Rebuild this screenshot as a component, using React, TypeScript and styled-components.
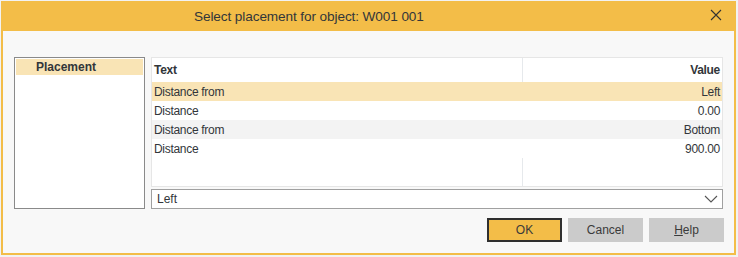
import React, { ReactElement } from 'react'
import styled, { createGlobalStyle } from 'styled-components'

const ORANGE = '#f3bd48'
const HIGHLIGHT = '#f9e4b5'
const TEXT = '#32363a'

const GlobalStyle = createGlobalStyle`
  html, body {
    margin: 0;
    padding: 0;
    background: #f2f2f2;
    font-family: "Liberation Sans", Arial, sans-serif;
  }
`

const Dialog = styled.div`
  box-sizing: border-box;
  margin: 1px 0 0 1px;
  width: 735px;
  height: 254px;
  border: 2px solid ${ORANGE};
  border-top: 0;
  background: #f8f8f8;
  display: flex;
  flex-direction: column;
`

const TitleBar = styled.div`
  height: 30px;
  margin: 0 -2px;
  background: ${ORANGE};
  display: flex;
  align-items: center;
  padding: 0 13px 0 193px;
`

const Title = styled.div`
  font-size: 13.6px;
  letter-spacing: -0.1px;
  color: ${TEXT};
  flex: 1;
`

const CloseButton = styled.button`
  width: 14px;
  height: 14px;
  padding: 0;
  border: 0;
  background: none;
  display: flex;
  align-items: center;
  justify-content: center;
  margin-top: -2px;
`

const Body = styled.div`
  flex: 1;
  display: flex;
  flex-direction: column;
  padding: 26px 10px 0 11px;
`

const Main = styled.div`
  display: flex;
  gap: 6px;
  height: 152px;
`

const SideList = styled.div`
  box-sizing: border-box;
  width: 131px;
  border: 1px solid #8a8a8a;
  background: #fff;
  padding: 1px;
`

const SideItem = styled.div<{ $selected?: boolean }>`
  height: 16px;
  line-height: 16px;
  padding-left: 20px;
  font-size: 12px;
  font-weight: bold;
  color: ${TEXT};
  background: ${(p) => (p.$selected ? HIGHLIGHT : 'transparent')};
`

const RightColumn = styled.div`
  width: 572px;
  display: flex;
  flex-direction: column;
  gap: 2px;
`

const Table = styled.div`
  box-sizing: border-box;
  height: 130px;
  border: 1px solid #e6e6e6;
  background: #fff;
  display: flex;
  flex-direction: column;
`

const Row = styled.div<{ $bg?: string; $height?: number }>`
  display: grid;
  grid-template-columns: 371px 1fr;
  height: ${(p) => p.$height ?? 19}px;
  background: ${(p) => p.$bg ?? 'transparent'};
  font-size: 12px;
  letter-spacing: -0.3px;
  color: ${TEXT};
`

const Cell = styled.div<{ $right?: boolean; $bold?: boolean; $divider?: boolean }>`
  display: flex;
  align-items: center;
  justify-content: ${(p) => (p.$right ? 'flex-end' : 'flex-start')};
  padding: 0 2px;
  font-weight: ${(p) => (p.$bold ? 'bold' : 'normal')};
  border-right: ${(p) => (p.$divider ? '1px solid #e6e9ec' : '0')};
`

const Filler = styled(Row)`
  flex: 1;
  height: auto;
`

const Select = styled.div`
  box-sizing: border-box;
  height: 20px;
  border: 1px solid #a0a0a0;
  background: #fff;
  display: flex;
  align-items: center;
  justify-content: space-between;
  padding: 0 4px 0 5px;
  font-size: 12px;
  color: ${TEXT};
`

const Buttons = styled.div`
  display: flex;
  justify-content: flex-end;
  gap: 6px;
  margin-top: 9px;
`

const Button = styled.button<{ $primary?: boolean }>`
  box-sizing: border-box;
  width: 75px;
  height: 24px;
  font-family: inherit;
  font-size: 12px;
  color: #3a3a3a;
  background: ${(p) => (p.$primary ? ORANGE : '#cbcbcb')};
  border: ${(p) => (p.$primary ? '2px solid #2f2f2f' : '0')};
  padding: 0;
`

const rows = [
  { text: 'Distance from', value: 'Left', bg: HIGHLIGHT },
  { text: 'Distance', value: '0.00' },
  { text: 'Distance from', value: 'Bottom', bg: '#f3f3f3' },
  { text: 'Distance', value: '900.00' },
]

const App = (): ReactElement => {
  return (
    <>
      <GlobalStyle />
      <Dialog>
        <TitleBar>
          <Title>Select placement for object: W001 001</Title>
          <CloseButton>
            <svg width="12" height="12" viewBox="0 0 12 12">
              <path d="M1 1 L11 11 M11 1 L1 11" stroke="#333" strokeWidth="1.1" />
            </svg>
          </CloseButton>
        </TitleBar>
        <Body>
          <Main>
            <SideList>
              <SideItem $selected>Placement</SideItem>
            </SideList>
            <RightColumn>
              <Table>
                <Row $height={24}>
                  <Cell $bold $divider>Text</Cell>
                  <Cell $bold $right>Value</Cell>
                </Row>
                {rows.map((r, i) => (
                  <Row key={i} $bg={r.bg}>
                    <Cell>{r.text}</Cell>
                    <Cell $right>{r.value}</Cell>
                  </Row>
                ))}
                <Filler>
                  <Cell $divider />
                  <Cell />
                </Filler>
              </Table>
              <Select>
                <span>Left</span>
                <svg width="14" height="8" viewBox="0 0 14 8">
                  <path d="M1 1 L7 7 L13 1" fill="none" stroke="#555" strokeWidth="1.1" />
                </svg>
              </Select>
            </RightColumn>
          </Main>
          <Buttons>
            <Button $primary>OK</Button>
            <Button>Cancel</Button>
            <Button>
              <u>H</u>elp
            </Button>
          </Buttons>
        </Body>
      </Dialog>
    </>
  )
}

export default App
